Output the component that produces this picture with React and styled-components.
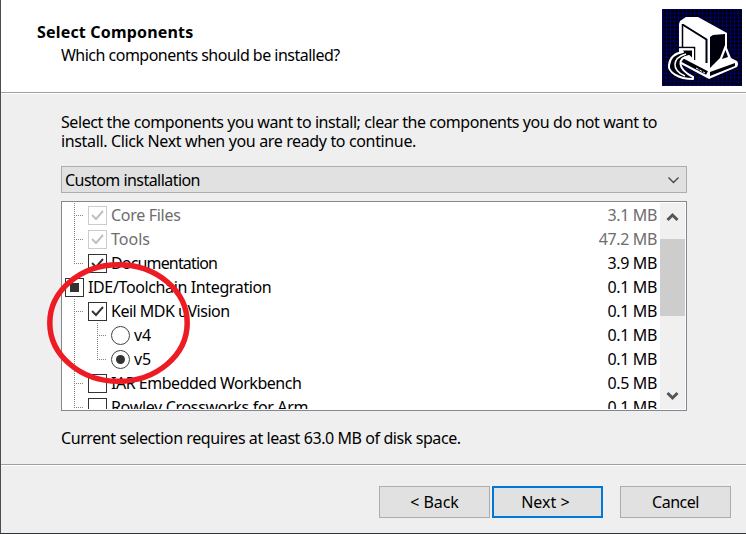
import React from "react";
import styled, { createGlobalStyle, css } from "styled-components";

const Global = createGlobalStyle`
  *{box-sizing:border-box}
  html,body{margin:0;padding:0;background:#efefef}
  body{width:746px;height:534px;overflow:hidden}
`;
const Dialog = styled.main`
  position: relative;
  display: flex;
  flex-direction: column;
  width: 746px;
  height: 534px;
  background: #efefef;
  border-left: 1px solid #4a4d52;
  border-bottom: 1px solid #2c3338;
  font: 16px/19px "Noto Sans", sans-serif;
  color: #000;
`;
const Header = styled.header`
  display: flex;
  justify-content: space-between;
  height: 94px;
  padding: 9px 3px 0 36px;
  background: #fff;
  border-bottom: 1px solid #fff;
  box-shadow: inset 0 -1px #a0a0a0;
`;
const Titles = styled.div`
  padding-top: 13px;
`;
const Title = styled.h1`
  margin: 0;
  font-size: 16px;
  line-height: 20px;
  font-weight: 700;
`;
const Subtitle = styled.div`
  padding: 4px 0 0 24px;
`;
const Text = styled.span`
  display: block;
  white-space: pre;
  letter-spacing: ${(p) => p.$track || 0}px;
`;
const Content = styled.section`
  height: 371px;
  padding: 19px 59px 0 60px;
`;
const Combo = styled.div`
  display: flex;
  align-items: center;
  justify-content: space-between;
  margin-top: 15px;
  height: 27px;
  padding: 1px 6px 0 3px;
  background: #e1e1e1;
  border: 1px solid #adadad;
`;
const List = styled.div`
  display: flex;
  height: 210px;
  margin-top: 8px;
  padding: 1px;
  background: #fff;
  border: 1px solid #828790;
`;
const Rows = styled.div`
  flex: 1;
  overflow: hidden;
`;
const dots = "#808080 0 1px, transparent 1px 2px";
const Guide = styled.span`
  width: ${(p) => p.$w}px;
  height: 24px;
  flex: none;
  background-repeat: no-repeat;
  background-image: ${(p) =>
    [
      p.$line && `repeating-linear-gradient(180deg, ${dots})`,
      p.$branch && `repeating-linear-gradient(90deg, ${dots})`,
    ].filter(Boolean).join(",") || "none"};
  background-size: ${(p) => `1px ${p.$end ? 13 : 24}px`}, 10px 1px;
  background-position: ${(p) => p.$x}px 0, ${(p) => p.$x}px 12px;
`;
const Row = styled.div`
  display: flex;
  align-items: center;
  height: 24px;
  padding-right: 3px;
  color: ${(p) => (p.$off ? "#6d6d6d" : "#000")};
`;
const Label = styled.div`
  flex: 1;
  padding-left: 4px;
`;
const Box = styled.span`
  display: grid;
  place-items: center;
  width: 19px;
  height: 19px;
  flex: none;
  background: #fff;
  border: 1px solid ${(p) => (p.$off ? "#ccc" : "#333")};
  color: ${(p) => (p.$off ? "#bfbfbf" : "#333")};
  ${(p) => p.$round && css`border-radius: 50%; border-color: #444;`}
`;
const Fill = styled.span`
  width: 9px;
  height: 9px;
  background: #333;
  ${(p) => p.$round && css`border-radius: 50%;`}
`;
const Scroll = styled.div`
  display: flex;
  flex-direction: column;
  justify-content: space-between;
  align-items: center;
  width: 25px;
  background: #f0f0f0;
  padding: 9px 0 8px;
`;
const Thumb = styled.div`
  width: 25px;
  height: 77px;
  margin: 17px 0 auto;
  background: #cdcdcd;
`;
const Note = styled.div`
  margin-top: 18px;
`;
const Footer = styled.footer`
  display: flex;
  flex: 1;
  justify-content: flex-end;
  border-top: 1px solid #fff;
  box-shadow: 0 -1px #a0a0a0;
  padding: 20px 15px 0 0;
`;
const Button = styled.button`
  width: 111px;
  height: 32px;
  padding: 0;
  margin: 0 0 0 ${(p) => p.$gap || 0}px;
  background: #e1e1e1;
  border: ${(p) => (p.$primary ? "2px solid #0078d7" : "1px solid #adadad")};
  font: inherit;
  color: inherit;
`;
const Marker = styled.svg`
  position: absolute;
  left: 43px;
  top: 260px;
`;

const Tick = () => (
  <svg width="15" height="15" viewBox="0 0 15 15" fill="none" stroke="currentColor" strokeWidth="1.9">
    <path d="M2 7l4 4 7-8" />
  </svg>
);
const Chevron = ({ up }) => (
  <svg width="13" height="10" viewBox="0 0 13 10" fill="none" stroke="#555" strokeWidth="3">
    <path d={up ? "M1.5 8 6.5 3l5 5" : "M1.5 2l5 5 5-5"} />
  </svg>
);
const Logo = () => (
  <svg width="81" height="77" viewBox="0 0 81 77">
    <defs>
      <pattern id="grid" width="4" height="4" patternUnits="userSpaceOnUse">
        <rect width="4" height="4" fill="#00000c" />
        <path d="M0 .5h4M.5 0v4" stroke="#000060" />
      </pattern>
    </defs>
    <rect width="80" height="77" fill="url(#grid)" />
    <path d="M17 15 18 12 24 8H36L65 24V39L69 49 75 52Q77 55 75 58L47 70 17 54z" fill="#fff" />
    <path d="M48 28 51 26 63 25V36L58 49 48 59z" fill="#00000c" />
    <path d="M20.5 15.5 44.5 30.5V54" fill="none" stroke="#00000c" strokeWidth="2" />
    <path d="M20.5 15V39" fill="none" stroke="#00000c" strokeWidth="1.5" />
    <path d="M60 50 63.5 41 66 48z" fill="#00000c" />
    <path d="M48 63 73 54V57L48 67z" fill="#00000c" />
    <path d="M20 51 45 64" stroke="#00000c" strokeWidth="4" />
    <path d="M34 59 43 64" stroke="#fff" strokeDasharray="3 1" />
    <path d="M17 38.5H32.5V51" fill="none" stroke="#00000c" strokeWidth="1.5" />
    <path d="M18 40.5H31V51L27 47C15 49 15 60 31 68V70C16 70 6 63 7 56 8 48 14 44 21 43z" fill="#00000c" stroke="#fff" strokeWidth="2" strokeLinejoin="round" />
    <path d="M24 45C10 49 9 61 23 67" fill="none" stroke="#fff" strokeWidth="1.5" />
  </svg>
);

const rows = [
  { t: "Core Files", s: "3.1 MB", k: -0.3, off: true, check: true },
  { t: "Tools", s: "47.2 MB", k: 0, off: true, check: true },
  { t: "Documentation", s: "3.9 MB", k: -0.84, check: true, end: true },
  { t: "IDE/Toolchain Integration", s: "0.1 MB", k: -0.37, root: true },
  { t: "Keil MDK uVision", s: "0.1 MB", k: -0.5, check: true },
  { t: "v4", s: "0.1 MB", k: -0.2, radio: true },
  { t: "v5", s: "0.1 MB", k: -0.2, radio: true, on: true, end: true },
  { t: "IAR Embedded Workbench", s: "0.5 MB", k: -0.48 },
  { t: "Rowley Crossworks for Arm", s: "0.1 MB", k: -0.33 },
];

export default function App() {
  return (
    <Dialog>
      <Global />
      <Header>
        <Titles>
          <Title><Text $track={0.18}>Select Components</Text></Title>
          <Subtitle><Text $track={-0.51}>Which components should be installed?</Text></Subtitle>
        </Titles>
        <Logo />
      </Header>
      <Content>
        <Text $track={-0.43}>Select the components you want to install; clear the components you do not want to</Text>
        <Text $track={-0.36}>install. Click Next when you are ready to continue.</Text>
        <Combo>
          <Text $track={-0.55}>Custom installation</Text>
          <svg width="13" height="8" viewBox="0 0 13 8" fill="none" stroke="#444" strokeWidth="1.3"><path d="M1.5 1.5l5 5 5-5" /></svg>
        </Combo>
        <List>
          <Rows>
            {rows.map((r) => (
              <Row key={r.t} $off={r.off}>
                {r.root ? <Guide $w={2} /> : <Guide $w={r.radio ? 23 : 25} $x={11} $line $branch={!r.radio} $end={r.end && !r.radio} />}
                {r.radio && <Guide $w={25} $x={11} $line $branch $end={r.end} />}
                <Box $off={r.off} $round={r.radio}>
                  {r.check && <Tick />}
                  {(r.root || r.on) && <Fill $round={r.radio} />}
                </Box>
                <Label><Text $track={r.k}>{r.t}</Text></Label>
                <Text $track={-0.35}>{r.s}</Text>
              </Row>
            ))}
          </Rows>
          <Scroll><Chevron up /><Thumb /><Chevron /></Scroll>
        </List>
        <Note><Text $track={-0.42}>Current selection requires at least 63.0 MB of disk space.</Text></Note>
      </Content>
      <Footer>
        <Button><Text $track={-0.1}>&lt; Back</Text></Button>
        <Button $gap={2} $primary><Text>Next &gt; </Text></Button>
        <Button $gap={17}><Text $track={-0.5}>Cancel</Text></Button>
      </Footer>
      <Marker width="150" height="128" fill="none" stroke="#ed1c24" strokeWidth="5.5">
        <ellipse cx="74.5" cy="63" rx="68.7" ry="58.3" />
      </Marker>
    </Dialog>
  );
}
